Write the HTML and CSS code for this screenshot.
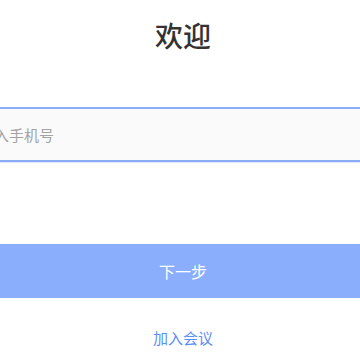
FILE: index.html
```html
<!DOCTYPE html>
<html lang="zh">
<head>
<meta charset="utf-8">
<link rel="stylesheet" href="styles.css">
</head>
<body>
<div class="page">
  <h1 class="title">欢迎</h1>
  <input class="phone" type="text" placeholder="输入手机号">
  <button class="next">下一步</button>
  <a class="join" href="#">加入会议</a>
</div>
</body>
</html>
```
FILE: styles.css
```css
html, body {
  margin: 0;
  padding: 0;
  background: #ffffff;
  overflow: hidden;
}
body {
  font-family: "Noto Sans CJK SC", "Noto Sans", sans-serif;
}
.page {
  width: 440px;
  margin-left: -37px;
  padding-top: 15px;
  display: flex;
  flex-direction: column;
  align-items: stretch;
}
.title {
  margin: 0;
  font-size: 28px;
  line-height: 40px;
  font-weight: 500;
  color: #333333;
  text-align: center;
}
.phone {
  margin-top: 52px;
  box-sizing: border-box;
  height: 55px;
  border: 2px solid #8aaefc;
  border-left-width: 2px;
  background: #fafafa;
  padding: 0 0 0 14px;
  font-family: inherit;
  font-size: 15px;
  color: #333;
  outline: none;
  box-shadow: 0 1px 0 #dbe6fe;
}
.phone::placeholder {
  color: #a3a3a3;
}
.next {
  margin-top: 82px;
  height: 54px;
  border: none;
  background: #8aaefc;
  color: #ffffff;
  font-family: inherit;
  font-size: 16px;
  padding: 0;
}
.join {
  margin-top: 30px;
  line-height: 20px;
  font-size: 15px;
  color: #5b8ef8;
  text-decoration: none;
  text-align: center;
}
```
